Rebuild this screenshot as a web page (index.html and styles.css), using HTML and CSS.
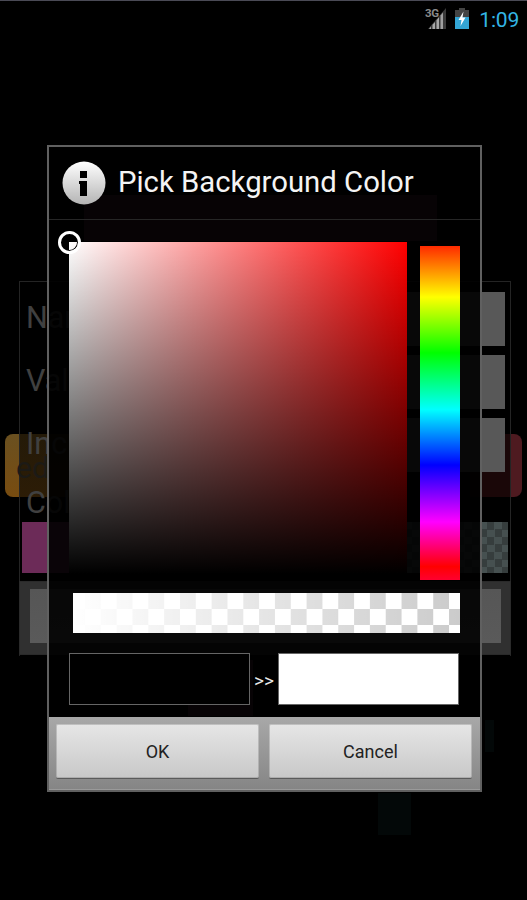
FILE: index.html
```html
<!DOCTYPE html>
<html lang="en">
<head>
<meta charset="utf-8">
<title>Pick Background Color</title>
<link rel="stylesheet" href="styles.css">
</head>
<body>
<div class="screen">
  <header class="status">
    <span class="net">3G</span>
    <svg class="signal" width="18" height="21" viewBox="0 0 18 21">
      <path d="M0 21 L18 0 V21 Z" fill="#3a3a3a"/>
      <path d="M1 21 L3 18.6 V21 Z M4.5 21 V16.8 L7 14 V21 Z M8.5 21 V12.2 L11 9.3 V21 Z" fill="#a8a8a8"/>
      <path d="M12.5 21 V7.6 L15 4.6 V21 Z" fill="#a0a0a0"/>
    </svg>
    <svg class="battery" width="14" height="21" viewBox="0 0 14 21">
      <rect x="4" y="0" width="6" height="2" fill="#444"/>
      <rect x="0" y="2" width="14" height="19" fill="#444"/>
      <rect x="0" y="9" width="14" height="12" fill="#33a5d5"/>
      <path d="M8.5 3.5 L3.5 12 H6.5 L5.5 18 L10.5 9.5 H7.5 Z" fill="#fff"/>
    </svg>
    <time class="clock">1:09</time>
  </header>

  <div class="tab tab-left"></div>
  <div class="tab tab-right"></div>
  <div class="patch patch-title"></div>
  <div class="patch patch-preview"></div>
  <div class="patch patch-side"></div>
  <div class="patch patch-bottom"></div>

  <main class="panel">
    <div class="ghost ghost-left"><span class="ghost-text">ed</span></div>
    <div class="ghost ghost-right"></div>
    <div class="row"><label class="row-label">Name</label><div class="field"></div></div>
    <div class="row"><label class="row-label">Value</label><div class="field"></div></div>
    <div class="row"><label class="row-label">Inc</label><div class="field"></div></div>
    <div class="row-label color-label">Color</div>
    <div class="strip"></div>
    <div class="actions"><div class="action"></div></div>
  </main>

  <section class="dialog">
    <div class="dialog-title">
      <svg class="info" width="44" height="44" viewBox="0 0 44 44">
        <defs>
          <linearGradient id="infoFill" x1="0" y1="0" x2="0" y2="1">
            <stop offset="0" stop-color="#ffffff"/>
            <stop offset="1" stop-color="#b4b4b4"/>
          </linearGradient>
        </defs>
        <circle cx="22" cy="22" r="21.5" fill="url(#infoFill)"/>
        <rect x="18" y="10" width="7" height="7" fill="#000"/>
        <rect x="17" y="20" width="8" height="3" fill="#000"/>
        <rect x="18" y="20" width="7" height="15" fill="#000"/>
      </svg>
      <h1>Pick Background Color</h1>
    </div>
    <div class="picker">
      <div class="sv"><span class="cursor"></span></div>
      <div class="hue"></div>
    </div>
    <div class="alpha"></div>
    <div class="preview">
      <div class="swatch swatch-old"></div>
      <span class="arrows">&gt;&gt;</span>
      <div class="swatch swatch-new"></div>
    </div>
    <div class="dialog-actions">
      <button class="btn" type="button">OK</button>
      <button class="btn" type="button">Cancel</button>
    </div>
  </section>
</div>
</body>
</html>
```
FILE: styles.css
```css
* { box-sizing: border-box; }
html, body { margin: 0; padding: 0; background: #000; }
.screen {
  position: relative;
  width: 527px;
  height: 900px;
  overflow: hidden;
  background: #000;
  font-family: Roboto, "Liberation Sans", sans-serif;
}

/* status bar */
.status {
  height: 32px;
  display: flex;
  align-items: flex-start;
  justify-content: flex-end;
  padding: 8px 8px 0 0;
  border-top: 1px solid #4a4a55;
  position: relative;
}
.net {
  position: absolute;
  left: 425px;
  top: 6px;
  font-size: 11.5px;
  font-weight: 700;
  line-height: 12px;
  letter-spacing: -.3px;
  color: #8a8a8a;
}
.signal { margin-top: -1px; }
.battery { margin: -1px 0 0 9px; }
.clock {
  margin: -1px 0 0 10px;
  font-size: 21px;
  line-height: 24px;
  letter-spacing: -.2px;
  color: #33b5e5;
}

/* dimmed layer behind the dialog */
.panel {
  margin: 249px 0 0 19px;
  width: 492px;
  height: 375px;
  border: 1px solid #242424;
  border-bottom: 0;
  position: relative;
  display: flex;
  flex-direction: column;
  padding-top: 10px;
}
.row {
  height: 54px;
  margin-bottom: 9px;
  display: flex;
  align-items: center;
  justify-content: space-between;
  padding: 0 5px 0 6px;
  position: relative;
}
.row-label {
  font-size: 30.5px;
  line-height: 36px;
  margin-bottom: 3px;
  color: #404040;
}
.field {
  width: 375px;
  height: 54px;
  background: #585858;
}
.color-label {
  margin: 4px 0 0 6px;
  height: 37px;
  position: relative;
}
.strip {
  margin: 0 2px 0 2px;
  height: 51px;
  flex: none;
  background:
    linear-gradient(to right, #6c2b58 0 50%, transparent 50%),
    conic-gradient(#465050 25%, #363d3d 0 50%, #465050 0 75%, #363d3d 0) 0 0 / 15px 15px;
  position: relative;
}
.actions {
  margin: 8px -1px 0;
  height: 74px;
  flex: none;
  padding: 7px 9px 13px 10px;
  background: #303030;
  border: 1px solid #2a2a2a;
}
.action {
  height: 54px;
  background: linear-gradient(#565656, #5a5a5a);
}
.tab {
  position: absolute;
  top: 434px;
  height: 63px;
}
.tab-left {
  left: 5px;
  width: 14px;
  border-radius: 8px 0 0 8px;
  background: linear-gradient(#6a5020, #784c10);
}
.tab-right {
  left: 511px;
  width: 11px;
  border-radius: 0 8px 8px 0;
  background: #4e1a20;
}
.ghost {
  position: absolute;
  top: 152px;
  height: 63px;
}
.ghost-left {
  left: 0;
  width: 50px;
  background: linear-gradient(#241a08, #2c1c06);
}
.ghost-text {
  position: absolute;
  left: -4px;
  top: 19px;
  font-size: 30px;
  line-height: 30px;
  color: #1c1a16;
}
.ghost-right {
  right: 0;
  width: 40px;
  background: #1a0708;
}
.patch { position: absolute; }
.patch-title { left: 84px; top: 195px; width: 353px; height: 46px; background: #4a2038; }
.patch-preview { left: 188px; top: 660px; width: 65px; height: 56px; background: #4a2038; }
.patch-side { left: 485px; top: 720px; width: 9px; height: 32px; background: #030808; }
.patch-bottom { left: 378px; top: 793px; width: 33px; height: 42px; background: #030808; }

/* dialog */
.dialog {
  position: absolute;
  z-index: 2;
  left: 47px;
  top: 145px;
  width: 435px;
  height: 647px;
  border: 2px solid #606060;
  background: rgba(0, 0, 0, .9);
  display: flex;
  flex-direction: column;
}
.dialog-title {
  height: 73px;
  flex: none;
  display: flex;
  align-items: center;
  padding: 0 0 1px 13px;
  border-bottom: 1px solid #262626;
}
.info { flex: none; }
.dialog-title h1 {
  margin: -1px 0 0 12px;
  font-size: 29.3px;
  line-height: 34px;
  font-weight: 400;
  color: #f4f4f4;
  white-space: nowrap;
}
.picker {
  display: flex;
  align-items: flex-start;
  padding: 22px 0 0 20px;
}
.sv {
  position: relative;
  width: 338px;
  height: 332px;
  flex: none;
  background:
    linear-gradient(to bottom, rgba(0, 0, 0, 0), #000),
    linear-gradient(to right, #fff, #f00);
}
.cursor {
  position: absolute;
  left: -11px;
  top: -11px;
  width: 23px;
  height: 23px;
  border: 3px solid #fff;
  border-radius: 50%;
  box-shadow: inset 0 0 0 1px #000;
}
.hue {
  margin: 4px 0 0 13px;
  width: 40px;
  height: 334px;
  flex: none;
  background: linear-gradient(to bottom, #ff2a00 0, #ff0 15.3%, #0f0 32%, #0ff 49%, #00f 65.6%, #f0f 82.6%, #f00 96%, #ff0030 100%);
}
.alpha {
  margin: 13px 0 0 24px;
  width: 387px;
  height: 40px;
  flex: none;
  background:
    linear-gradient(to right, #fff, rgba(255, 255, 255, 0)),
    conic-gradient(#cbcbcb 25%, #fff 0 50%, #cbcbcb 0 75%, #fff 0) -3.83px 0 / 31.66px 32px;
}
.preview {
  margin: 20px 0 0 20px;
  display: flex;
  align-items: center;
  height: 52px;
  flex: none;
}
.swatch {
  width: 181px;
  height: 52px;
  flex: none;
  border: 1px solid #666;
}
.swatch-old { background: #000; }
.swatch-new { background: #fff; }
.arrows {
  width: 28px;
  padding-top: 2px;
  text-align: center;
  font-size: 19px;
  font-weight: 400;
  color: #e8e8e8;
}
.dialog-actions {
  margin-top: 12px;
  flex: 1;
  display: flex;
  gap: 10px;
  padding: 7px 8px 0 7px;
  background: linear-gradient(#a8a8a8, #858585);
  box-shadow: inset 0 -1px 0 #9a9a9a;
}
.btn {
  width: 203px;
  height: 54px;
  flex: none;
  border: 0;
  border-radius: 2px;
  background: linear-gradient(#e6e6e6, #c8c8c8);
  box-shadow: 0 1px 0 #5a5a5a, inset 0 0 0 1px rgba(120, 120, 120, .35);
  font-family: Roboto, "Liberation Sans", sans-serif;
  font-size: 18px;
  color: #222;
  padding: 0;
}
```
